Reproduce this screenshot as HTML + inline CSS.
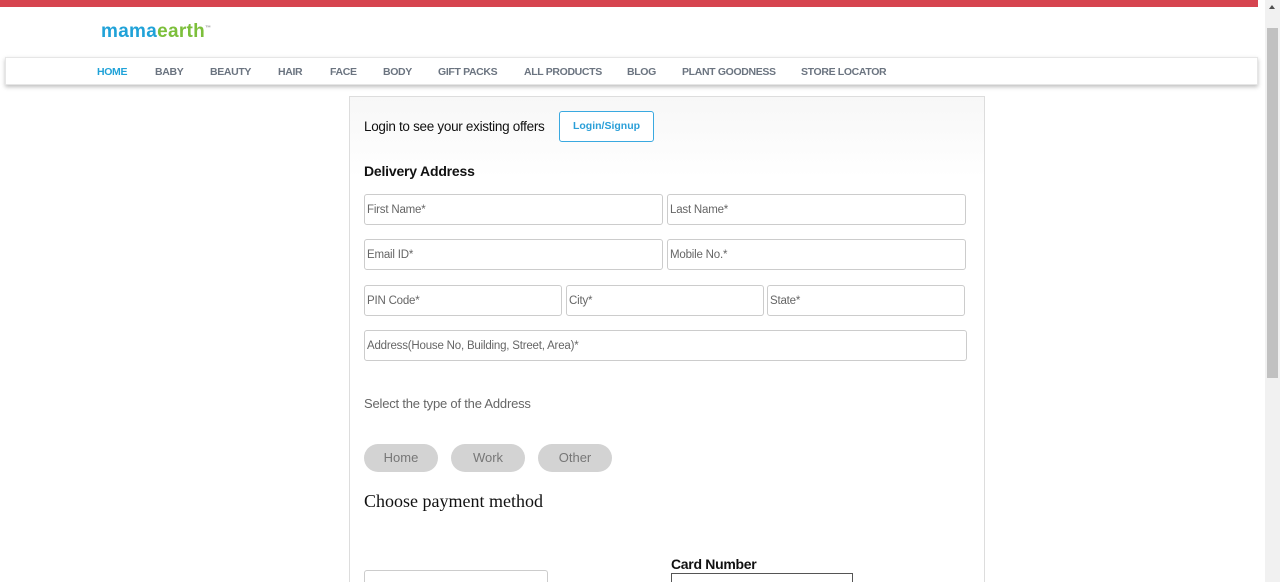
<!DOCTYPE html>
<html><head><meta charset="utf-8"><style>
*{box-sizing:border-box;margin:0;padding:0}
html,body{width:1280px;height:582px;overflow:hidden}
body{background:#fff;font-family:"Liberation Sans",sans-serif;position:relative}
.abs{position:absolute}
.redbar{left:0;top:0;width:1258px;height:7px;background:#d6444f}
.sb{left:1265px;top:0;width:15px;height:582px;background:#f1f1f1}
.sb .th{position:absolute;left:2px;top:28px;width:11px;height:350px;background:#c1c1c1}
.sb .ar{position:absolute;left:4px;top:5px;width:0;height:0;border-left:3px solid transparent;border-right:3px solid transparent;border-bottom:4px solid #505050}
.logo{left:101px;top:21px;font-size:19px;font-weight:bold;letter-spacing:0.3px}
.nav{left:5px;top:57px;width:1253px;height:28px;background:#fff;box-shadow:0 2px 4px rgba(0,0,0,.25);border:1px solid #e6e6e6}
.nav span{position:absolute;top:8px;font-size:10.5px;color:#6b7480;font-weight:bold;letter-spacing:-0.35px}
.card{left:349px;top:96px;width:636px;height:486px;border:1px solid #ddd;border-bottom:none;background:linear-gradient(#f7f7f7,#fff 80px)}
.inp{position:absolute;height:31px;border:1px solid #ccc;border-radius:3px;background:#fff;font-size:11.5px;color:#666;padding:9px 2px;letter-spacing:-0.2px}
.pill{position:absolute;top:444px;width:74px;height:28px;border-radius:14px;background:#d3d3d3;color:#777;font-size:13px;text-align:center;line-height:28px}
</style></head><body>
<div class="abs redbar"></div>
<div class="abs sb"><div class="ar"></div><div class="th"></div></div>
<div class="abs logo"><span style="color:#20a2d8">mama</span><span style="color:#7cbf3b">earth</span><sup style="font-size:6px;color:#999">™</sup></div>
<div class="abs nav">
<span style="left:91px;color:#20a2d8">HOME</span>
<span style="left:149px">BABY</span>
<span style="left:204px">BEAUTY</span>
<span style="left:272px">HAIR</span>
<span style="left:324px">FACE</span>
<span style="left:377px">BODY</span>
<span style="left:432px">GIFT PACKS</span>
<span style="left:518px">ALL PRODUCTS</span>
<span style="left:621px">BLOG</span>
<span style="left:676px">PLANT GOODNESS</span>
<span style="left:795px">STORE LOCATOR</span>
</div>
<div class="abs card"></div>
<div class="abs" style="left:364px;top:119px;font-size:13.5px;color:#111;letter-spacing:-0.3px">Login to see your existing offers</div>
<div class="abs" style="left:559px;top:111px;width:95px;height:31px;border:1px solid #3aa9e0;border-radius:3px;color:#2a9fd8;font-size:10.5px;font-weight:bold;text-align:center;line-height:29px;background:#fff">Login/Signup</div>
<div class="abs" style="left:364px;top:163px;font-size:14px;color:#111;font-weight:bold;letter-spacing:-0.2px">Delivery Address</div>
<div class="inp" style="left:364px;top:194px;width:299px">First Name*</div>
<div class="inp" style="left:667px;top:194px;width:299px">Last Name*</div>
<div class="inp" style="left:364px;top:239px;width:299px">Email ID*</div>
<div class="inp" style="left:667px;top:239px;width:299px">Mobile No.*</div>
<div class="inp" style="left:364px;top:285px;width:198px">PIN Code*</div>
<div class="inp" style="left:566px;top:285px;width:198px">City*</div>
<div class="inp" style="left:767px;top:285px;width:198px">State*</div>
<div class="inp" style="left:364px;top:330px;width:603px">Address(House No, Building, Street, Area)*</div>
<div class="abs" style="left:364px;top:396px;font-size:13px;color:#666;letter-spacing:-0.2px">Select the type of the Address</div>
<div class="pill" style="left:364px">Home</div>
<div class="pill" style="left:451px">Work</div>
<div class="pill" style="left:538px">Other</div>
<div class="abs" style="left:364px;top:491px;font-family:'Liberation Serif',serif;font-size:18px;color:#111">Choose payment method</div>
<div class="abs" style="left:671px;top:556px;font-size:14px;color:#111;font-weight:bold;letter-spacing:-0.3px">Card Number</div>
<div class="abs" style="left:671px;top:573px;width:182px;height:9px;border:1px solid #555;border-bottom:none"></div>
<div class="abs" style="left:364px;top:570px;width:184px;height:12px;border:1px solid #ccc;border-bottom:none;border-radius:3px 3px 0 0"></div>
</body></html>
